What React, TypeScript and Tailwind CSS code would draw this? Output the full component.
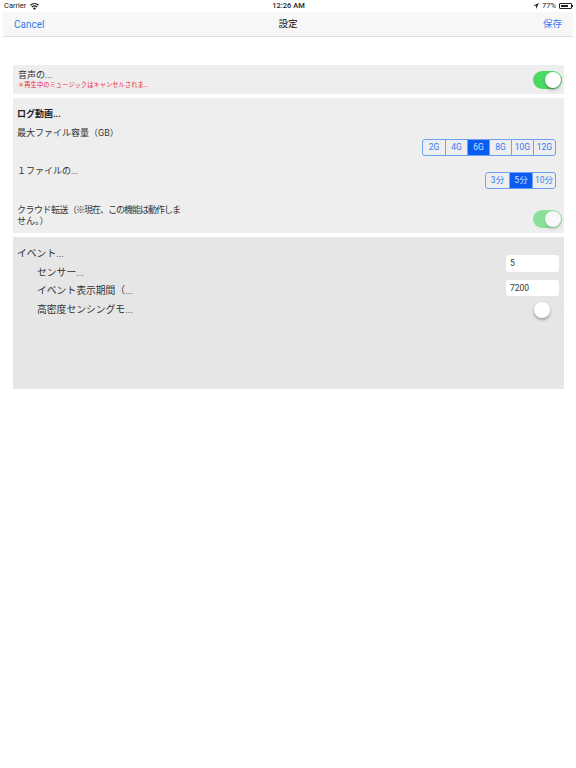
import React from 'react';

const font = { fontFamily: 'Roboto, "Noto Sans CJK JP", sans-serif' };

const Toggle: React.FC<{ on: boolean; faded?: boolean }> = ({ on, faded }) => (
  <div
    className={`flex h-[18px] w-[29px] items-center rounded-full ${
      on ? 'justify-end bg-[#4cd964] px-px' : 'justify-start border border-[#e2e2e2] bg-transparent'
    } ${faded ? 'opacity-60' : ''}`}
  >
    <div className="h-4 w-4 rounded-full bg-white shadow-[0_2px_3px_rgba(0,0,0,0.3)]" />
  </div>
);

const Segmented: React.FC<{ items: string[]; active: string; widths: string }> = ({ items, active, widths }) => (
  <div className="flex h-[17px] overflow-hidden rounded-[3px] border border-[#6ea2f6]">
    {items.map((item, i) => (
      <div
        key={item}
        className={`flex items-center justify-center whitespace-nowrap text-[8.5px] ${widths} ${
          i > 0 ? 'border-l border-[#6ea2f6]' : ''
        } ${item === active ? 'bg-[#0a5cf0] text-[#cfe0ff]' : 'text-[#2f7cf6]'}`}
      >
        {item}
      </div>
    ))}
  </div>
);

const StatusBar = () => (
  <div className="flex h-3 items-center justify-between pl-1 pr-[3px] text-[7.5px] text-[#222]">
    <div className="flex w-[120px] items-center gap-[4px]">
      <span>Carrier</span>
      <svg width="9" height="7" viewBox="0 0 18 14" fill="#222">
        <path d="M9 14 6 10.5a4.5 4.5 0 0 1 6 0zM4.6 8.9 2.9 7a9.2 9.2 0 0 1 12.2 0l-1.7 1.9a6.7 6.7 0 0 0-8.8 0zM1.6 5.5 0 3.6a13.6 13.6 0 0 1 18 0l-1.6 1.9a11.2 11.2 0 0 0-14.8 0z" />
      </svg>
    </div>
    <span className="font-medium">12:26 AM</span>
    <div className="flex w-[120px] items-center justify-end gap-[3px]">
      <svg width="6" height="6" viewBox="0 0 12 12" fill="#222">
        <path d="M12 0 0 5.5h6V12z" />
      </svg>
      <span>77%</span>
      <div className="flex items-center">
        <div className="h-[6px] w-[13px] rounded-[1px] border border-[#222] p-px">
          <div className="h-full w-[77%] bg-[#222]" />
        </div>
        <div className="h-[2px] w-px bg-[#222]" />
      </div>
    </div>
  </div>
);

const NavBar = () => (
  <div className="mx-[3px] flex h-[25px] items-center justify-between border-b border-[#dcdcdc] bg-[#f7f7f7] pl-[11px] pr-[11px]">
    <span className="w-16 text-[10px] text-[#2f7cf6]">Cancel</span>
    <span className="text-[9.5px] text-[#111]">設定</span>
    <span className="w-16 text-right text-[9.5px] text-[#2f7cf6]">保存</span>
  </div>
);

export default function App() {
  return (
    <div className="min-h-[768px] bg-white" style={font}>
      <StatusBar />
      <NavBar />
      <div className="flex flex-col gap-1 pl-[13px] pr-3 pt-7">
        <section className="flex h-[29px] items-center justify-between bg-[#eeeeee] pl-[5px] pr-[2px]">
          <div className="flex flex-col">
            <span className="text-[9px] leading-[11px] text-[#333]">音声の...</span>
            <span className="text-[6.3px] leading-[9px] text-[#f0243c]">＊再生中のミュージックはキャンセルされま...</span>
          </div>
          <Toggle on />
        </section>

        <section className="flex h-[135px] flex-col bg-[#eeeeee] pl-1 pr-2 pt-[11px] text-[9px] leading-[11px] text-[#333]">
          <span className="font-bold text-[#222]">ログ動画...</span>
          <span className="mt-2">最大ファイル容量（GB）</span>
          <div className="flex justify-end">
            <Segmented items={['2G', '4G', '6G', '8G', '10G', '12G']} active="6G" widths="w-[22px]" />
          </div>
          <span className="mt-[10px]">１ファイルの...</span>
          <div className="mt-[-5px] flex justify-end">
            <Segmented items={['3分', '5分', '10分']} active="5分" widths="w-[23px]" />
          </div>
          <div className="mt-4 flex items-start justify-between">
            <span className="whitespace-nowrap">
              <span className="tracking-[-0.5px]">クラウド転送</span>
              <span className="tracking-[-1px]">（※現在、この機能は動作しま</span>
              <br />
              せん。）
            </span>
            <div className="mr-[-6px] mt-[5px]">
              <Toggle on faded />
            </div>
          </div>
        </section>

        <section className="flex h-[152px] items-start justify-between bg-[#e6e6e6] pl-1 pr-[2px] text-[#333]">
          <div className="flex flex-col pt-[8px] text-[9.8px] leading-[18.7px]">
            <span>イベント...</span>
            <span className="pl-5">センサー...</span>
            <span className="pl-5">イベント表示期間（...</span>
            <span className="pl-5">高密度センシングモ...</span>
          </div>
          <div className="flex flex-col items-end pt-[18px] text-[8.5px]">
            <div className="mr-[3px] flex h-[17px] w-[53px] items-center rounded-[3px] bg-white px-1">5</div>
            <div className="mr-[3px] mt-2 flex h-4 w-[53px] items-center rounded-[3px] bg-white px-1">7200</div>
            <div className="mt-[5px]">
              <Toggle on={false} />
            </div>
          </div>
        </section>
      </div>
    </div>
  );
}
